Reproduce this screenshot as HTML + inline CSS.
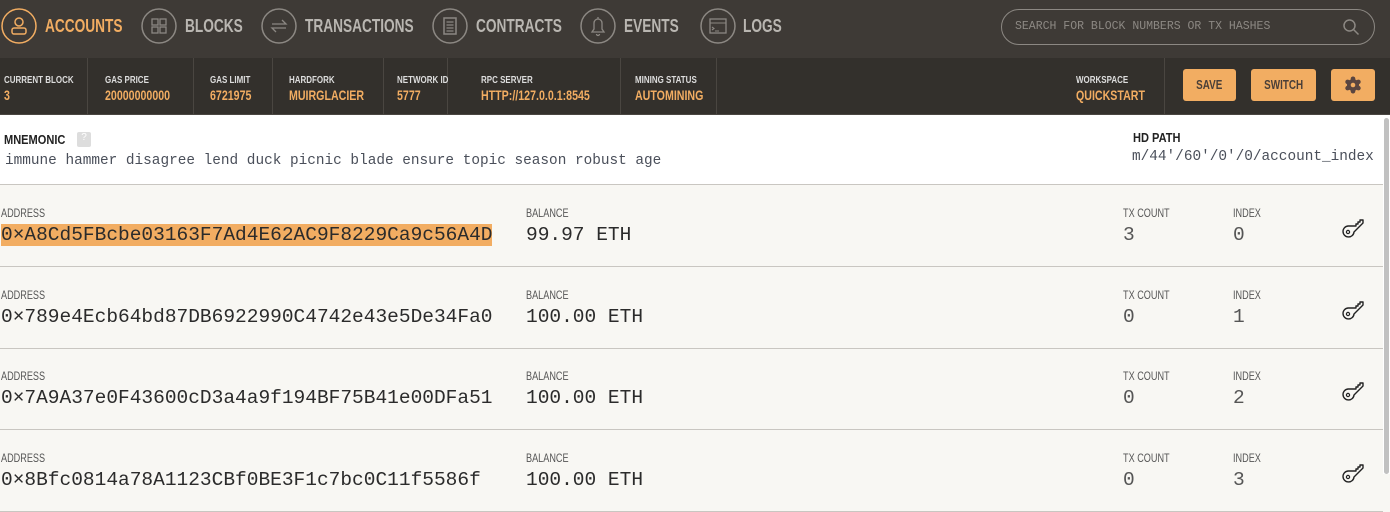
<!DOCTYPE html>
<html><head><meta charset="utf-8"><style>
*{margin:0;padding:0;box-sizing:border-box}
body{width:1390px;height:474px;overflow:hidden;background:#f8f7f3;font-family:"Liberation Sans",sans-serif;position:relative}
.nav{position:absolute;left:0;top:0;width:1390px;height:58px;background:#3e3a36}
.c{display:inline-block;white-space:nowrap;transform:scaleX(.76);transform-origin:left center;font-weight:bold}
.ic{position:absolute;top:8px;width:36px;height:36px}
.nt{position:absolute;top:16px;font-size:18px;color:#b9b6b1}
.search{position:absolute;left:1001px;top:9px;width:374px;height:36px;border:1px solid #8c8883;border-radius:18px;font-family:"Liberation Mono",monospace;font-size:11.5px;color:#8c8883;padding:10px 0 0 13px}
.stats{position:absolute;left:0;top:58px;width:1390px;height:57px;background:#33302c;border-bottom:1px solid #4a4641}
.st{position:absolute;top:0;height:57px;padding:13px 0 0 4px;border-right:1px solid #4a4641;line-height:1}
.st .l{font-size:10.5px;color:#ddd}
.st .v{font-size:14px;color:#f2ad62;margin-top:1px}
.btn{position:absolute;top:69px;height:32px;background:#f2ad62;border-radius:3px;color:#4a3f38;font-size:13px;text-align:center;line-height:32px}
.mn{position:absolute;left:0;top:115px;width:1383px;height:70px;background:#fff;border-bottom:1px solid #c9c6c1}
.mono{font-family:"Liberation Mono",monospace}
.row{position:absolute;left:0;width:1383px;height:82px;border-bottom:1px solid #c9c6c1}
.lab{position:absolute;top:21px;font-size:12px;color:#555;font-weight:normal!important}
.val{position:absolute;top:39px;font-size:19.5px;color:#2b2b2b;font-family:"Liberation Mono",monospace;white-space:nowrap}
.sb{position:absolute;left:1383px;top:115px;width:7px;height:359px;background:#fff}
.sb div{position:absolute;left:1px;top:3px;width:5px;height:356px;background:#c1c1c1;border-radius:3px}
</style></head><body>
<div class="nav">
 <svg class="ic" style="left:1px" viewBox="0 0 36 36"><circle cx="18" cy="18" r="17" fill="none" stroke="#f2ad62" stroke-width="1.5"/><circle cx="18" cy="14" r="4" fill="none" stroke="#f2ad62" stroke-width="1.5"/><rect x="11" y="20" width="14" height="6" rx="2" fill="none" stroke="#f2ad62" stroke-width="1.5"/></svg>
 <span class="nt c" style="left:45px;color:#f2ad62">ACCOUNTS</span>
 <svg class="ic" style="left:141px" viewBox="0 0 36 36"><circle cx="18" cy="18" r="17" fill="none" stroke="#8c8883" stroke-width="1.5"/><rect x="11" y="11" width="6" height="6" fill="none" stroke="#8c8883" stroke-width="1.3"/><rect x="19" y="11" width="6" height="6" fill="none" stroke="#8c8883" stroke-width="1.3"/><rect x="11" y="19" width="6" height="6" fill="none" stroke="#8c8883" stroke-width="1.3"/><rect x="19" y="19" width="6" height="6" fill="none" stroke="#8c8883" stroke-width="1.3"/></svg>
 <span class="nt c" style="left:185px">BLOCKS</span>
 <svg class="ic" style="left:261px" viewBox="0 0 36 36"><circle cx="18" cy="18" r="17" fill="none" stroke="#8c8883" stroke-width="1.5"/><path d="M11 16h14l-4-4M25 20H11l4 4" fill="none" stroke="#8c8883" stroke-width="1.3"/></svg>
 <span class="nt c" style="left:305px">TRANSACTIONS</span>
 <svg class="ic" style="left:432px" viewBox="0 0 36 36"><circle cx="18" cy="18" r="17" fill="none" stroke="#8c8883" stroke-width="1.5"/><rect x="12" y="10" width="12" height="16" fill="none" stroke="#8c8883" stroke-width="1.5"/><path d="M14.5 14h7M14.5 17h7M14.5 20h7M14.5 23h7" stroke="#8c8883" stroke-width="1.3"/></svg>
 <span class="nt c" style="left:476px">CONTRACTS</span>
 <svg class="ic" style="left:580px" viewBox="0 0 36 36"><circle cx="18" cy="18" r="17" fill="none" stroke="#8c8883" stroke-width="1.5"/><path d="M12 24h12l-2-3v-6a4 4 0 0 0-8 0v6z M16.5 26a1.5 1.5 0 0 0 3 0M18 9v2" fill="none" stroke="#8c8883" stroke-width="1.3"/></svg>
 <span class="nt c" style="left:624px">EVENTS</span>
 <svg class="ic" style="left:700px" viewBox="0 0 36 36"><circle cx="18" cy="18" r="17" fill="none" stroke="#8c8883" stroke-width="1.5"/><rect x="10" y="11" width="16" height="14" fill="none" stroke="#8c8883" stroke-width="1.3"/><path d="M10 15h16M12 19l2 1.5-2 1.5M15 23h4" fill="none" stroke="#8c8883" stroke-width="1.1"/></svg>
 <span class="nt c" style="left:743px">LOGS</span>
 <div class="search">SEARCH FOR BLOCK NUMBERS OR TX HASHES
  <svg style="position:absolute;right:14px;top:8px" width="18" height="18" viewBox="0 0 18 18"><circle cx="7.5" cy="7.5" r="5.5" fill="none" stroke="#8c8883" stroke-width="1.5"/><path d="M11.5 11.5l5 5" stroke="#8c8883" stroke-width="1.5"/></svg></div>
</div>
<div class="stats">
 <div class="st" style="left:0;width:88px"><span class="l c">CURRENT BLOCK</span><br><span class="v c">3</span></div>
 <div class="st" style="left:88px;width:106px;padding-left:17px"><span class="l c">GAS PRICE</span><br><span class="v c">20000000000</span></div>
 <div class="st" style="left:194px;width:79px;padding-left:16px"><span class="l c">GAS LIMIT</span><br><span class="v c">6721975</span></div>
 <div class="st" style="left:273px;width:111px;padding-left:16px"><span class="l c">HARDFORK</span><br><span class="v c">MUIRGLACIER</span></div>
 <div class="st" style="left:384px;width:64px;padding-left:13px"><span class="l c">NETWORK ID</span><br><span class="v c">5777</span></div>
 <div class="st" style="left:448px;width:173px;padding-left:33px"><span class="l c">RPC SERVER</span><br><span class="v c">HTTP://127.0.0.1:8545</span></div>
 <div class="st" style="left:621px;width:96px;padding-left:14px"><span class="l c">MINING STATUS</span><br><span class="v c">AUTOMINING</span></div>
 <div class="st" style="left:1076px;width:89px;padding-left:0"><span class="l c">WORKSPACE</span><br><span class="v c">QUICKSTART</span></div>
</div>
<div class="btn" style="left:1183px;width:53px"><span class="c" style="transform-origin:center">SAVE</span></div>
<div class="btn" style="left:1251px;width:65px"><span class="c" style="transform-origin:center">SWITCH</span></div>
<div class="btn" style="left:1331px;width:44px"><svg style="margin-top:7px" width="18" height="18" viewBox="0 0 18 18"><g fill="#5a4540"><circle cx="9" cy="9" r="6"/><circle cx="9" cy="2.8" r="2.3"/><circle cx="9" cy="15.2" r="2.3"/><circle cx="3.6" cy="5.9" r="2.3"/><circle cx="14.4" cy="5.9" r="2.3"/><circle cx="3.6" cy="12.1" r="2.3"/><circle cx="14.4" cy="12.1" r="2.3"/></g><circle cx="9" cy="9" r="2.3" fill="#f2ad62"/></svg></div>
<div class="mn">
 <div style="position:absolute;left:4px;top:17px;font-size:13px;color:#222"><span class="c" style="transform:scaleX(.85)">MNEMONIC</span> <span style="position:absolute;left:73px;top:0;width:14px;height:15px;background:#ddd;border-radius:2px;color:#fff;font-size:10px;text-align:center">?</span></div>
 <div class="mono" style="position:absolute;left:5px;top:38px;font-size:14.4px;color:#4a4f5a;white-space:nowrap">immune hammer disagree lend duck picnic blade ensure topic season robust age</div>
 <div style="position:absolute;left:1133px;top:15px;font-size:13px;color:#222"><span class="c" style="transform:scaleX(.85)">HD PATH</span></div>
 <div class="mono" style="position:absolute;left:1132px;top:34px;font-size:14.4px;color:#4a4f5a">m/44'/60'/0'/0/account_index</div>
</div>
<div class="sb"><div></div></div>
<div id="rows"></div>
<script>
var d=[["0×A8Cd5FBcbe03163F7Ad4E62AC9F8229Ca9c56A4D","99.97 ETH","3","0"],["0×789e4Ecb64bd87DB6922990C4742e43e5De34Fa0","100.00 ETH","0","1"],["0×7A9A37e0F43600cD3a4a9f194BF75B41e00DFa51","100.00 ETH","0","2"],["0×8Bfc0814a78A1123CBf0BE3F1c7bc0C11f5586f","100.00 ETH","0","3"]];
var h="";
d.forEach(function(r,i){
 var t=185+i*81.7;
 var hl=i==0?"background:#f2ad62;":"";
 h+='<div class="row" style="top:'+t+'px"><span class="lab c" style="left:1px">ADDRESS</span><div class="val" style="left:1px;'+hl+'">'+r[0]+'</div><span class="lab c" style="left:526px">BALANCE</span><div class="val" style="left:526px">'+r[1]+'</div><span class="lab c" style="left:1123px">TX COUNT</span><div class="val" style="left:1123px;color:#555">'+r[2]+'</div><span class="lab c" style="left:1233px">INDEX</span><div class="val" style="left:1233px;color:#555">'+r[3]+'</div><svg style="position:absolute;left:1341px;top:28px" width="26" height="26" viewBox="0 0 26 26"><path d="M7 13a5.5 5.5 0 1 0 6 6l9-9v-3h-3v2h-2v2h-2v2h-2z" fill="none" stroke="#222" stroke-width="1.4" stroke-linejoin="round"/><circle cx="7" cy="19" r="1.6" fill="none" stroke="#222" stroke-width="1.2"/></svg></div>';
});
document.getElementById("rows").innerHTML=h;
</script>
</body></html>
